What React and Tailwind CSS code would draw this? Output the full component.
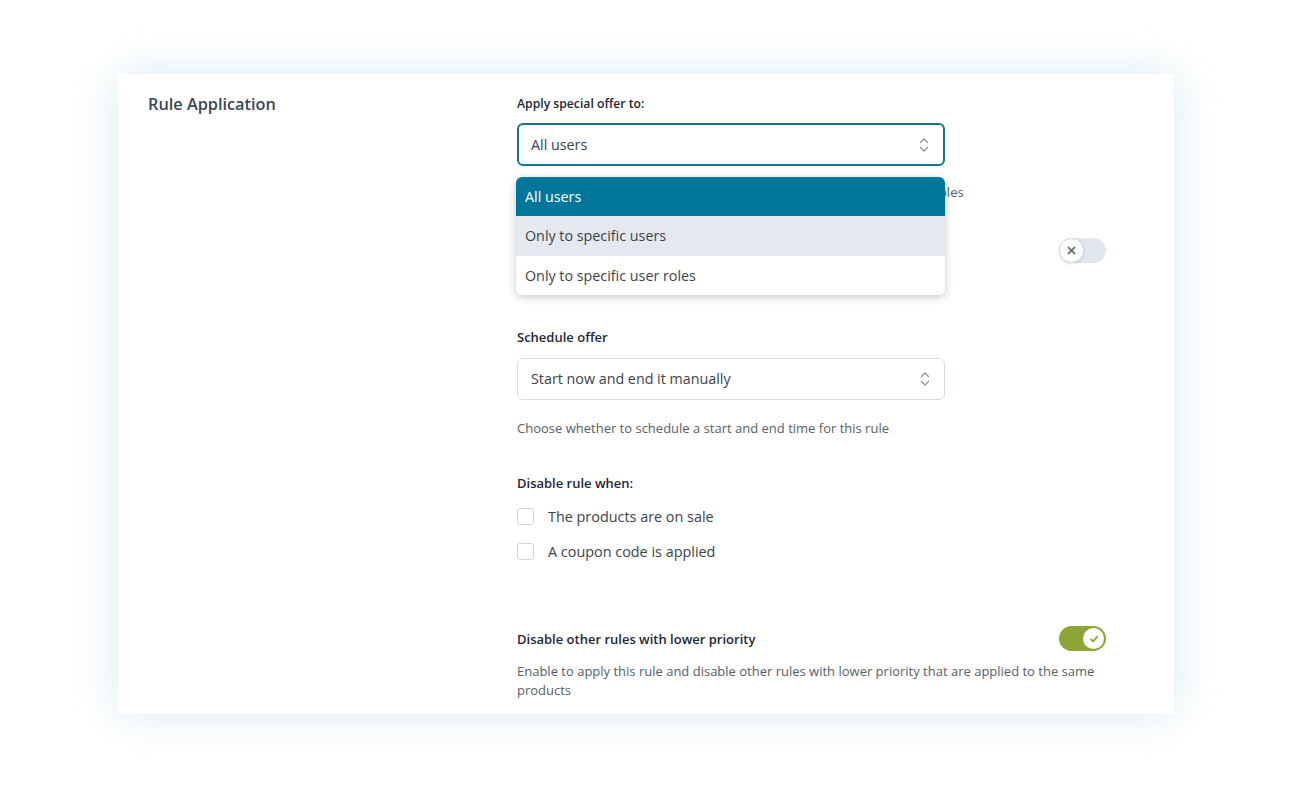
import { useState } from "react";

function UpDown() {
  return (
    <svg width="10" height="16" viewBox="0 0 10 16" fill="none" stroke="#8a94a0" strokeWidth="1.3" strokeLinecap="round" strokeLinejoin="round">
      <polyline points="1.5,5.5 5,2 8.5,5.5" />
      <polyline points="1.5,10.5 5,14 8.5,10.5" />
    </svg>
  );
}

function Toggle({ on }) {
  if (on) {
    return (
      <div className="flex h-[25px] w-[47px] items-center justify-end rounded-full bg-[#8ea436] p-[2px]">
        <div className="flex h-[21px] w-[21px] items-center justify-center rounded-full bg-white">
          <svg width="10" height="10" viewBox="0 0 10 10" fill="none" stroke="#8ea436" strokeWidth="1.8" strokeLinecap="round" strokeLinejoin="round">
            <polyline points="2,5.3 4.2,7.3 8,2.8" />
          </svg>
        </div>
      </div>
    );
  }
  return (
    <div className="flex h-[25px] w-[47px] items-center rounded-full bg-[#e1e7ef]">
      <div className="flex h-[25px] w-[25px] items-center justify-center rounded-full border border-[#d8dee6] bg-white shadow-sm">
        <svg width="9" height="9" viewBox="0 0 9 9" fill="none" stroke="#6b7480" strokeWidth="1.8" strokeLinecap="round">
          <line x1="1.5" y1="1.5" x2="7.5" y2="7.5" />
          <line x1="7.5" y1="1.5" x2="1.5" y2="7.5" />
        </svg>
      </div>
    </div>
  );
}

function Label({ children, className = "" }) {
  return (
    <div className={"font-semibold leading-[18px] text-[#1f2733] " + className}>
      {children}
    </div>
  );
}

function Help({ children, className = "" }) {
  return (
    <p className={"text-[13px] leading-[19px] text-[#575e66] " + className}>{children}</p>
  );
}

function Checkbox({ label }) {
  return (
    <label className="flex h-[35px] items-center gap-[14px]">
      <span className="h-[17px] w-[17px] rounded-[3px] border border-[#cfd5dc] bg-white" />
      <span className="text-[14.4px] text-[#3c434a]">{label}</span>
    </label>
  );
}

export default function App() {
  const [selected] = useState("All users");
  const options = ["All users", "Only to specific users", "Only to specific user roles"];

  return (
    <div
      className="min-h-[788px] bg-white pt-[74px]"
      style={{ fontFamily: '"Open Sans", "Noto Sans", sans-serif' }}
    >
      <div className="ml-[118px] w-[1056px] bg-white pb-[14px] pl-[30px] pr-[68px] pt-[21px] shadow-[0_0_40px_rgba(110,185,210,0.28)]">
        <div className="grid grid-cols-[369px_1fr]">
          <h2 className="text-[16.3px] font-semibold leading-[18px] text-[#3a4654]">
            Rule Application
          </h2>

          <div>
            <Label className="text-[12.2px]">Apply special offer to:</Label>
            <div className="relative mt-[10px] w-[428px]">
              <div className="flex h-[43px] items-center justify-between rounded-[6px] border-2 border-[#17718f] bg-white pl-[12px] pr-[14px]">
                <span className="text-[14.3px] text-[#3c434a]">{selected}</span>
                <UpDown />
              </div>
              <ul className="absolute left-[-1px] top-[54px] z-10 w-[429px] overflow-hidden rounded-[6px] bg-white shadow-[0_2px_8px_rgba(0,0,0,0.22)]">
                {options.map((o, i) => (
                  <li
                    key={o}
                    className={
                      "flex h-[39.3px] items-center px-[9px] text-[14.3px] " +
                      (i === 0
                        ? "bg-[#00769a] text-white"
                        : i === 1
                        ? "bg-[#e4e8ef] text-[#3c434a]"
                        : "bg-white text-[#3c434a]")
                    }
                  >
                    {o}
                  </li>
                ))}
              </ul>
            </div>
            <Help className="mt-[17px] whitespace-nowrap">
              Choose whether to apply this offer to all users, specific users or user roles
            </Help>

            <div className="mt-[36px] flex h-[25px] items-center justify-end">
              <Toggle on={false} />
            </div>

            <Label className="mt-[65px] text-[13px]">Schedule offer</Label>
            <div className="mt-[12px] flex h-[42px] w-[428px] items-center justify-between rounded-[6px] border border-[#d8dde3] bg-white pl-[13px] pr-[14px]">
              <span className="text-[14.3px] text-[#3c434a]">Start now and end it manually</span>
              <UpDown />
            </div>
            <Help className="mt-[19px]">
              Choose whether to schedule a start and end time for this rule
            </Help>

            <Label className="mt-[36px] text-[13px]">Disable rule when:</Label>
            <div className="mt-[7px]">
              <Checkbox label="The products are on sale" />
              <Checkbox label="A coupon code is applied" />
            </div>

            <div className="mt-[57px] flex items-center justify-between">
              <Label className="text-[13px]">Disable other rules with lower priority</Label>
              <Toggle on />
            </div>
            <Help className="mt-[11px]">
              Enable to apply this rule and disable other rules with lower priority that are applied to the same products
            </Help>
          </div>
        </div>
      </div>
    </div>
  );
}
